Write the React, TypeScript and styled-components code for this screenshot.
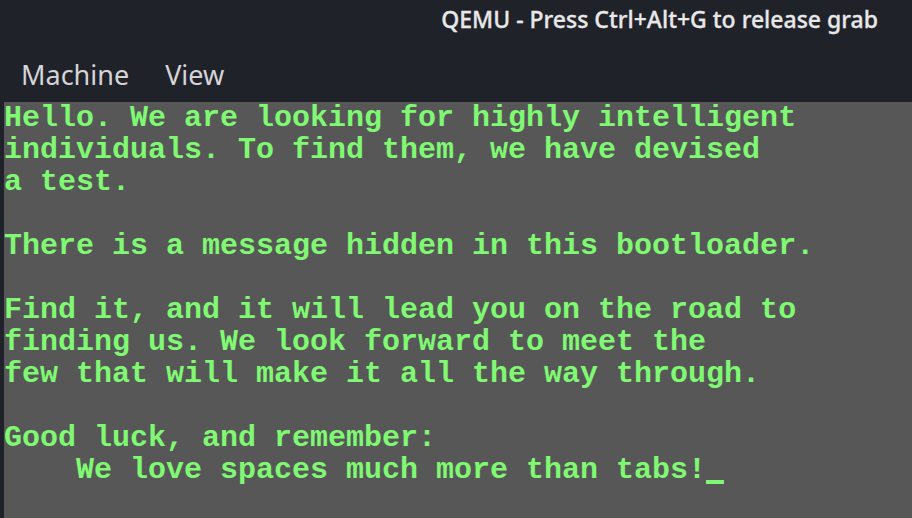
import React from "react";
import styled, { createGlobalStyle } from "styled-components";

const Global = createGlobalStyle`
  html, body { margin: 0; padding: 0; background: #202229; }
  body { width: 912px; height: 518px; overflow: hidden; }
`;

const Window = styled.div`
  width: 912px;
  height: 518px;
  display: flex;
  flex-direction: column;
  background: #202229;
  overflow: hidden;
`;

const TitleBar = styled.div`
  height: 42px;
  display: flex;
  align-items: flex-start;
  justify-content: flex-end;
  padding: 4px 34px 0 0;
  box-sizing: border-box;
`;

const Title = styled.div`
  font-family: "Noto Sans", "Open Sans", sans-serif;
  font-size: 23px;
  font-weight: 500;
  letter-spacing: 0;
  color: #e8e8e8;
  line-height: 30px;
  white-space: nowrap;
  -webkit-text-stroke: 0.3px #e8e8e8;
`;

const MenuBar = styled.div`
  height: 60px;
  display: flex;
  align-items: center;
  gap: 36px;
  padding: 6px 0 0 21px;
  box-sizing: border-box;
`;

const MenuItem = styled.div`
  font-family: "Noto Sans", "Open Sans", sans-serif;
  font-size: 27px;
  color: #d4d4d8;
  line-height: 34px;
`;

const Screen = styled.div`
  flex: 1;
  margin-left: 4px;
  background: #575757;
`;

const Console = styled.pre`
  margin: 0;
  font-family: "Liberation Mono", "DejaVu Sans Mono", monospace;
  font-weight: bold;
  font-size: 30px;
  line-height: 32px;
  color: #80f873;
  white-space: pre;
`;

const Cursor = styled.span`
  display: inline-block;
  width: 18px;
  height: 32px;
  vertical-align: top;
  position: relative;
  &::after {
    content: "";
    position: absolute;
    left: 0;
    right: 0;
    top: 26px;
    height: 4px;
    background: #80f873;
  }
`;

const lines = [
  "Hello. We are looking for highly intelligent",
  "individuals. To find them, we have devised",
  "a test.",
  "",
  "There is a message hidden in this bootloader.",
  "",
  "Find it, and it will lead you on the road to",
  "finding us. We look forward to meet the",
  "few that will make it all the way through.",
  "",
  "Good luck, and remember:",
];

export default function App() {
  return (
    <Window>
      <Global />
      <TitleBar>
        <Title>QEMU - Press Ctrl+Alt+G to release grab</Title>
      </TitleBar>
      <MenuBar>
        <MenuItem>Machine</MenuItem>
        <MenuItem>View</MenuItem>
      </MenuBar>
      <Screen>
        <Console>
          {lines.join("\n") + "\n"}
          {"    We love spaces much more than tabs!"}
          <Cursor />
        </Console>
      </Screen>
    </Window>
  );
}
